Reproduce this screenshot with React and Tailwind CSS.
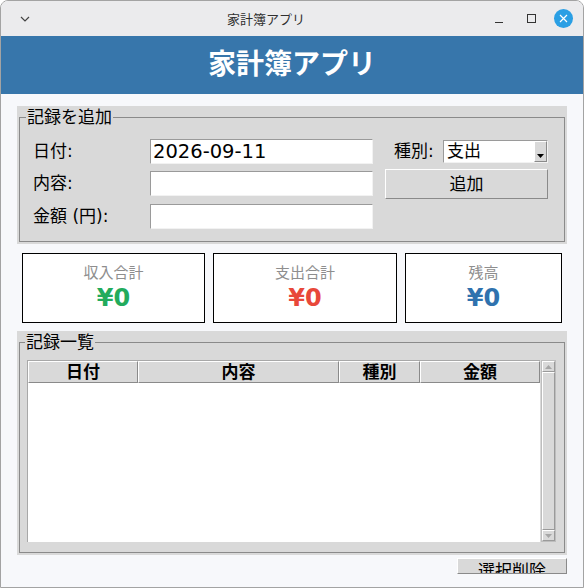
import React from 'react';

const font = { fontFamily: '"DejaVu Sans", "Noto Sans CJK JP", sans-serif' };
const sysFont = { fontFamily: '"Noto Sans", "Noto Sans CJK JP", sans-serif' };

function Entry({ value }) {
  return (
    <div className="w-[223px] h-[25px] bg-white border-t border-l border-[#9a9a9a] border-r border-b border-r-[#f2f2f2] border-b-[#f2f2f2] flex items-center pl-[2px] text-[19.5px] text-black leading-none">
      {value}
    </div>
  );
}

function Card({ label, value, color, width }) {
  return (
    <div className={`${width} h-[70px] bg-white border border-black flex flex-col items-center pt-[9px]`}>
      <div className="text-[15px] leading-[20px] text-[#8e8e8e]">{label}</div>
      <div className={`text-[24px] leading-[30px] font-bold ${color}`}>{value}</div>
    </div>
  );
}

function HeaderCell({ label, width }) {
  return (
    <div className={`${width} h-[22px] bg-[#d9d9d9] border-t border-l border-white border-r border-b border-r-[#8a8a8a] border-b-[#8a8a8a] flex items-center justify-center text-[17px] font-bold text-black leading-none`}>
      {label}
    </div>
  );
}

export default function App() {
  return (
    <div className="w-[584px] h-[588px] border border-[#a3a3a3] rounded-t-[8px] overflow-hidden bg-[#f7f8fb] flex flex-col" style={font}>
      {/* title bar */}
      <div className="h-[35px] bg-[#ebebed] flex items-center relative shrink-0" style={sysFont}>
        <svg width="10" height="6" viewBox="0 0 10 6" className="ml-[19px]">
          <path d="M1 1 L5 5 L9 1" fill="none" stroke="#444" strokeWidth="1.2" />
        </svg>
        <div className="absolute left-[226px] top-[9px] text-[13px] leading-[18px] text-[#2f2f2f]">家計簿アプリ</div>
        <div className="ml-auto flex items-center">
          <div className="w-[8px] h-[1.5px] bg-[#333] mt-[8px]" />
          <div className="w-[9px] h-[9px] border border-[#333] ml-[24px]" />
          <div className="w-[19px] h-[19px] rounded-full bg-[#2a9fe4] ml-[18px] mr-[10px] flex items-center justify-center">
            <svg width="9" height="9" viewBox="0 0 9 9">
              <path d="M1 1 L8 8 M8 1 L1 8" stroke="#fff" strokeWidth="1.2" />
            </svg>
          </div>
        </div>
      </div>

      {/* header */}
      <div className="h-[58px] bg-[#3776ab] flex items-center justify-center shrink-0">
        <div className="text-white text-[28px] font-bold leading-none">家計簿アプリ</div>
      </div>

      <div className="flex-1 px-[16px] pt-[12px] flex flex-col">
        {/* add record */}
        <div className="bg-[#d9d9d9] pl-[2px] pr-[2px] pb-[2px]">
          <fieldset className="border border-[#8a8a8a]">
            <legend className="ml-[6px] px-[1px] text-[17px] leading-[22px] text-black">記録を追加</legend>
            <div className="flex pl-[13px] pt-[11px] pb-[12px] text-[17px] text-black">
              <div className="flex flex-col">
                <div className="flex items-center h-[25px]">
                  <span className="w-[117px]">日付:</span>
                  <Entry value="2026-09-11" />
                </div>
                <div className="flex items-center h-[25px] mt-[7px]">
                  <span className="w-[117px]">内容:</span>
                  <Entry value="" />
                </div>
                <div className="flex items-center h-[25px] mt-[8px]">
                  <span className="w-[117px]">金額 (円):</span>
                  <Entry value="" />
                </div>
              </div>
              <div className="flex flex-col ml-[12px]">
                <div className="flex items-center h-[23px] mt-[1px]">
                  <span className="w-[58px] pl-[9px]">種別:</span>
                  <div className="w-[105px] h-[23px] bg-white border-t border-l border-[#9a9a9a] border-r border-b border-r-[#f2f2f2] border-b-[#f2f2f2] flex items-center">
                    <span className="pl-[3px] text-[17px] leading-none flex-1">支出</span>
                    <div className="w-[13px] h-[21px] bg-[#d9d9d9] border-t border-l border-white border-r border-b border-r-[#8a8a8a] border-b-[#8a8a8a] flex items-end justify-center pb-[3px]">
                      <svg width="7" height="4" viewBox="0 0 7 4">
                        <path d="M0 0 H7 L3.5 4 Z" fill="#000" />
                      </svg>
                    </div>
                  </div>
                </div>
                <button className="w-[163px] h-[30px] mt-[6px] bg-[#d9d9d9] border-t border-l border-white border-r border-b border-r-[#8a8a8a] border-b-[#8a8a8a] text-[17px] leading-none text-black">
                  追加
                </button>
              </div>
            </div>
          </fieldset>
        </div>

        {/* summary cards */}
        <div className="flex mt-[9px] ml-[5px] gap-[8px]">
          <Card label="収入合計" value="¥0" color="text-[#22ab5c]" width="w-[183px]" />
          <Card label="支出合計" value="¥0" color="text-[#e8483a]" width="w-[184px]" />
          <Card label="残高" value="¥0" color="text-[#2f72ae]" width="w-[157px]" />
        </div>

        {/* list */}
        <div className="bg-[#d9d9d9] pl-[2px] pr-[2px] pb-[2px] mt-[8px]">
          <fieldset className="border border-[#8a8a8a]">
            <legend className="ml-[5px] px-[1px] text-[17px] leading-[22px] text-black">記録一覧</legend>
            <div className="flex pl-[7px] pt-[7px] pb-[10px]">
              <div className="flex flex-col border-l border-t border-[#a8a8a8]">
                <div className="flex">
                  <HeaderCell label="日付" width="w-[110px]" />
                  <HeaderCell label="内容" width="w-[201px]" />
                  <HeaderCell label="種別" width="w-[81px]" />
                  <HeaderCell label="金額" width="w-[120px]" />
                </div>
                <div className="h-[159px] bg-white" />
              </div>
              <div className="w-[15px] h-[182px] ml-[1px] bg-[#d9d9d9] border border-[#bdbdbd] flex flex-col">
                <div className="h-[11px] border-t border-l border-white border-r border-b border-r-[#9a9a9a] border-b-[#9a9a9a] flex items-center justify-center">
                  <svg width="7" height="4" viewBox="0 0 7 4"><path d="M0 4 H7 L3.5 0 Z" fill="#a6a6a6" /></svg>
                </div>
                <div className="flex-1 border-t border-l border-white border-r border-b border-r-[#9a9a9a] border-b-[#9a9a9a]" />
                <div className="h-[11px] border-t border-l border-white border-r border-b border-r-[#9a9a9a] border-b-[#9a9a9a] flex items-center justify-center">
                  <svg width="7" height="4" viewBox="0 0 7 4"><path d="M0 0 H7 L3.5 4 Z" fill="#a6a6a6" /></svg>
                </div>
              </div>
            </div>
          </fieldset>
        </div>

        {/* delete button (clipped) */}
        <div className="flex justify-end mt-[3px]">
          <div className="w-[110px] h-[16px] overflow-hidden bg-[#d9d9d9] border-t border-l border-white border-r border-b border-r-[#8a8a8a] border-b-[#8a8a8a] flex justify-center">
            <span className="text-[17px] leading-none text-black pt-[4px]">選択削除</span>
          </div>
        </div>
      </div>
    </div>
  );
}
